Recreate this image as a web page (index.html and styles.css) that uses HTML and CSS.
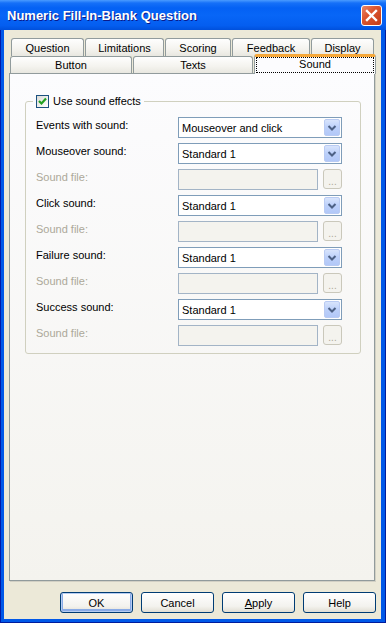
FILE: index.html
```html
<!DOCTYPE html>
<html lang="en">
<head>
    <meta charset="UTF-8">
    <title>Numeric Fill-In-Blank Question</title>
    <link rel="stylesheet" href="styles.css">
</head>
<body>

<div class="window">
    <div class="titlebar">
        <span class="title">Numeric Fill-In-Blank Question</span>
        <span class="close">
            <svg width="13" height="13" viewBox="0 0 13 13"><path d="M2 2 L11 11 M11 2 L2 11" stroke="#fff" stroke-width="2.4" stroke-linecap="square"/></svg>
        </span>
    </div>

    <div class="frame">
        <div class="client">
            <div class="tab-row row1">
                <div class="tab tab-question">Question</div>
                <div class="tab tab-limits">Limitations</div>
                <div class="tab tab-scoring">Scoring</div>
                <div class="tab tab-feedback">Feedback</div>
                <div class="tab tab-display">Display</div>
            </div>
            <div class="tab-row row2">
                <div class="tab tab-button">Button</div>
                <div class="tab tab-texts">Texts</div>
                <div class="tab tab-sound selected"><span class="focus">Sound</span></div>
            </div>

            <div class="panel">
                <fieldset class="group">
                    <legend>
                        <span class="checkbox">
                            <svg width="11" height="11" viewBox="0 0 11 11"><path d="M2 5 L4.5 7.5 L9 2.5" fill="none" stroke="#21a121" stroke-width="2.2"/></svg>
                        </span>
                        Use sound effects
                    </legend>

                    <div class="row">
                        <label>Events with sound:</label>
                        <div class="combo"><span>Mouseover and click</span><span class="arrow"></span></div>
                    </div>
                    <div class="row">
                        <label>Mouseover sound:</label>
                        <div class="combo"><span>Standard 1</span><span class="arrow"></span></div>
                    </div>
                    <div class="row disabled">
                        <label>Sound file:</label>
                        <div class="filebox"><span class="textbox"></span><span class="browse">...</span></div>
                    </div>
                    <div class="row">
                        <label>Click sound:</label>
                        <div class="combo"><span>Standard 1</span><span class="arrow"></span></div>
                    </div>
                    <div class="row disabled">
                        <label>Sound file:</label>
                        <div class="filebox"><span class="textbox"></span><span class="browse">...</span></div>
                    </div>
                    <div class="row">
                        <label>Failure sound:</label>
                        <div class="combo"><span>Standard 1</span><span class="arrow"></span></div>
                    </div>
                    <div class="row disabled">
                        <label>Sound file:</label>
                        <div class="filebox"><span class="textbox"></span><span class="browse">...</span></div>
                    </div>
                    <div class="row">
                        <label>Success sound:</label>
                        <div class="combo"><span>Standard 1</span><span class="arrow"></span></div>
                    </div>
                    <div class="row disabled">
                        <label>Sound file:</label>
                        <div class="filebox"><span class="textbox"></span><span class="browse">...</span></div>
                    </div>
                </fieldset>
            </div>

            <div class="buttons">
                <button class="default">OK</button>
                <button>Cancel</button>
                <button><u>A</u>pply</button>
                <button>Help</button>
            </div>
        </div>
    </div>
</div>

</body>
</html>
```

FILE: styles.css
```css
body {
    margin: 0;
    font-family: "Liberation Sans", Arial, sans-serif;
    font-size: 11px;
    color: #000;
    background: #fff;
}
.window {
    width: 386px;
    height: 623px;
    display: flex;
    flex-direction: column;
}
.titlebar {
    height: 30px;
    display: flex;
    align-items: center;
    justify-content: space-between;
    padding: 0 4px 0 7px;
    box-sizing: border-box;
    background: linear-gradient(#4a9bff 0, #1670f8 3px, #0461f4 8px, #0866f7 50%, #045ef0 85%, #0050dc 100%);
}
.title {
    color: #fff;
    font-weight: bold;
    font-size: 13px;
    text-shadow: 1px 1px 0 #0a1a8a;
}
.close {
    width: 21px;
    height: 21px;
    box-sizing: border-box;
    border: 1px solid #fff;
    border-radius: 3px;
    background: linear-gradient(135deg, #e8876a 0, #dc5630 40%, #c23c18 100%);
    display: flex;
    align-items: center;
    justify-content: center;
}
.frame {
    flex: 1;
    background: #0058e8;
    padding: 0 5px 4px 4px;
    box-shadow: inset 1px 0 0 #0019a8, inset -1px 0 0 #001b9c, inset 0 -1px 0 #001b9c;
    display: flex;
}
.client {
    flex: 1;
    background: #ece9d8;
    padding-top: 8px;
}

/* tabs */
.tab-row {
    display: flex;
    gap: 1px;
}
.row1 {
    margin-left: 7px;
    height: 18px;
}
.row2 {
    margin-left: 6px;
    height: 17px;
    align-items: flex-end;
}
.tab {
    box-sizing: border-box;
    height: 100%;
    border: 1px solid #919b9c;
    border-bottom: none;
    border-radius: 3px 3px 0 0;
    background: linear-gradient(#fefefe, #f4f3ee 60%, #e8e7e0);
    display: flex;
    align-items: center;
    justify-content: center;
}
.tab-question { width: 73px; }
.tab-limits { width: 79px; }
.tab-scoring { width: 66px; }
.tab-feedback { width: 78px; }
.tab-display { width: 63px; }
.tab-button { width: 122px; }
.tab-texts { width: 120px; }
.tab-sound { width: 122px; }

.tab.selected {
    height: 20px;
    margin-bottom: -1px;
    position: relative;
    z-index: 1;
    border-top: 3px solid #f6a83a;
    background: #fcfcfe;
    padding: 0 1px 1px;
}
.focus {
    width: 100%;
    height: 100%;
    box-sizing: border-box;
    border: 1px dotted #000;
    display: flex;
    justify-content: center;
    line-height: 12px;
}

/* page */
.panel {
    margin-left: 5px;
    width: 366px;
    height: 508px;
    box-sizing: border-box;
    border: 1px solid #919b9c;
    background: linear-gradient(#fcfcfe, #f4f3ee);
    box-shadow: 1px 1px 0 #d2d0c4;
    padding: 20px 0 0 15px;
}
.group {
    margin: 0;
    width: 336px;
    box-sizing: border-box;
    border: 1px solid #d0d0bf;
    border-radius: 3px;
    padding: 9px 0 7px 7px;
    display: flex;
    flex-direction: column;
    gap: 5px;
}
.group legend {
    padding: 0 3px;
    height: 14px;
    display: flex;
    align-items: center;
    gap: 4px;
}
.checkbox {
    width: 13px;
    height: 13px;
    box-sizing: border-box;
    border: 1px solid #1c5180;
    background: linear-gradient(135deg, #dcdcd7, #fff);
    display: flex;
    align-items: center;
    justify-content: center;
}
.row {
    display: grid;
    grid-template-columns: 142px 164px;
    padding-left: 3px;
    height: 21px;
}
.row label {
    padding-top: 2px;
    line-height: 13px;
}
.row.disabled label {
    color: #aca899;
}
.combo {
    box-sizing: border-box;
    height: 21px;
    border: 1px solid #7f9db9;
    background: #fff;
    display: flex;
    align-items: center;
    justify-content: space-between;
    padding: 1px 1px 1px 3px;
}
.arrow {
    width: 16px;
    height: 17px;
    box-sizing: border-box;
    border: 1px solid #b9cbf3;
    border-radius: 2px;
    background-image: url("data:image/svg+xml,%3Csvg xmlns='http://www.w3.org/2000/svg' width='14' height='15'%3E%3Cpath d='M3.5 6 L7 9.5 L10.5 6' fill='none' stroke='%234d6185' stroke-width='2'/%3E%3C/svg%3E"), linear-gradient(#d8e4fc, #bcd0fa 50%, #b2c8f8);
}
.filebox {
    display: flex;
    gap: 5px;
}
.textbox {
    width: 140px;
    height: 21px;
    box-sizing: border-box;
    border: 1px solid #a3b4c6;
    background: #f4f3ee;
}
.browse {
    width: 19px;
    height: 20px;
    box-sizing: border-box;
    border: 1px solid #cac8bb;
    border-radius: 3px;
    background: #f4f3ee;
    color: #aca899;
    font-size: 10px;
    display: flex;
    justify-content: center;
    align-items: flex-end;
    line-height: 13px;
}

/* dialog buttons */
.buttons {
    display: flex;
    justify-content: flex-end;
    gap: 8px;
    padding-right: 5px;
    margin-top: 11px;
}
.buttons button {
    width: 73px;
    height: 21px;
    font-family: "Liberation Sans", Arial, sans-serif;
    font-size: 11px;
    color: #000;
    border: 1px solid #003c74;
    border-radius: 3px;
    background: linear-gradient(#ffffff, #f3f2ee 70%, #e2ded3);
    padding: 0;
}
.buttons button.default {
    box-shadow: inset 0 0 0 1px #b6cdf2, inset 0 -1px 0 2px #8aabe6;
}
```
